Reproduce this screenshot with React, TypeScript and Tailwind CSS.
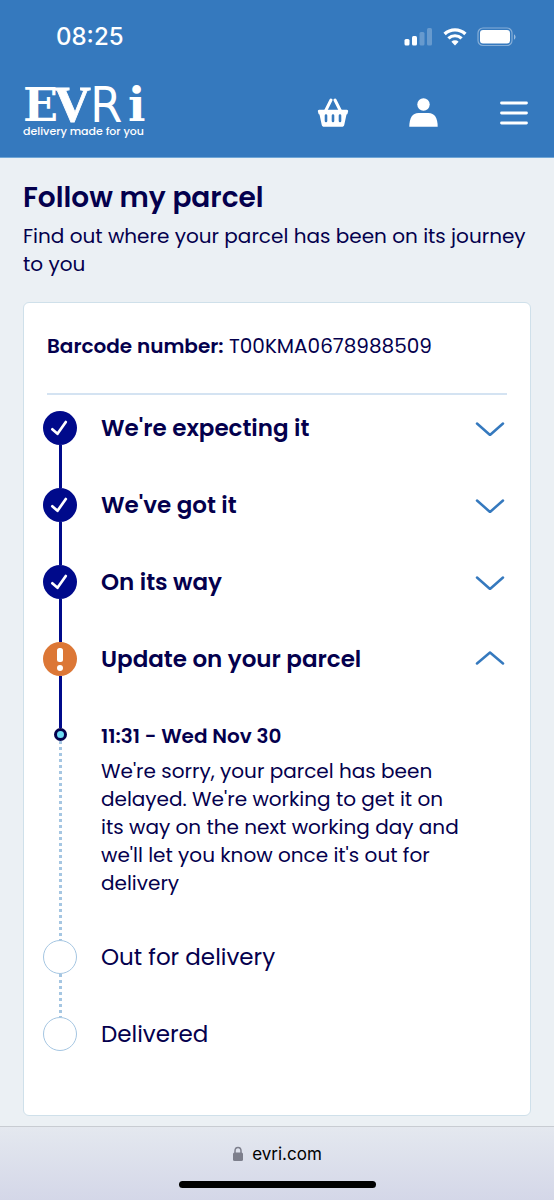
import { useState } from "react";

type StepState = "done" | "alert" | "pending";

type Step = {
  title: string;
  state: StepState;
  event?: { time: string; text: string };
};

const steps: Step[] = [
  { title: "We're expecting it", state: "done" },
  { title: "We've got it", state: "done" },
  { title: "On its way", state: "done" },
  {
    title: "Update on your parcel",
    state: "alert",
    event: {
      time: "11:31 - Wed Nov 30",
      text: "We're sorry, your parcel has been delayed. We're working to get it on its way on the next working day and we'll let you know once it's out for delivery",
    },
  },
  { title: "Out for delivery", state: "pending" },
  { title: "Delivered", state: "pending" },
];

function StatusBar() {
  return (
    <div className="flex h-[74px] items-center justify-between pr-[37px] pl-14">
      <span className="font-[Inter,sans-serif] text-2xl font-medium">08:25</span>
      <div className="flex items-center gap-[10px]">
        <svg width="29" height="18" viewBox="0 0 29 18" fill="currentColor" aria-hidden="true">
          <rect x="0.5" y="11" width="5" height="6.5" rx="1.5" />
          <rect x="8" y="8" width="5" height="9.5" rx="1.5" />
          <rect x="15.5" y="4" width="5" height="13.5" rx="1.5" opacity="0.25" />
          <rect x="23" y="0" width="5" height="17.5" rx="1.5" opacity="0.25" />
        </svg>
        <svg width="24" height="18" viewBox="0 0 24 18" fill="none" stroke="currentColor" aria-hidden="true">
          <path d="M1.6 6a15.200 15.200 0 0 1 20.800 0" strokeWidth="3.400" />
          <path d="M5.400 10.400a9.600 9.600 0 0 1 13.200 0" strokeWidth="3.200" />
          <path d="M12 17.500l-3.600-3.700a5.200 5.200 0 0 1 7.200 0z" fill="currentColor" stroke="none" />
        </svg>
        <svg width="40" height="20" viewBox="0 0 40 20" aria-hidden="true">
          <rect x="1" y="1" width="34" height="17.5" rx="5" fill="none" stroke="currentColor" strokeWidth="1.2" opacity="0.4" />
          <rect x="3" y="3" width="30" height="13.5" rx="3" fill="currentColor" />
          <path d="M37 7.500c2 .6 2 4.400 0 5z" fill="currentColor" opacity="0.5" />
        </svg>
      </div>
    </div>
  );
}

function Logo() {
  return (
    <a href="#home" className="flex flex-col">
      <svg className="overflow-visible" width="122" height="36" viewBox="0 0 122 36" fill="currentColor" role="img" aria-label="EVRi">
        <text x="0" y="34" fontFamily="DejaVu Serif, serif" fontWeight="700" fontSize="46">E</text>
        <text x="31" y="34" fontFamily="Liberation Serif, serif" fontWeight="700" fontSize="51" stroke="currentColor" strokeWidth="0.8">V</text>
        <text x="67" y="34" fontFamily="DejaVu Sans, sans-serif" fontWeight="200" fontSize="46" stroke="currentColor" strokeWidth="2">R</text>
        <text x="105" y="34" fontFamily="DejaVu Serif, serif" fontWeight="700" fontSize="46">i</text>
      </svg>
      <span className="text-[11px] leading-4 font-medium whitespace-nowrap">delivery made for you</span>
    </a>
  );
}

function Header() {
  return (
    <header className="border-b border-[#6fa6d6] bg-[#3579be] text-white">
      <StatusBar />
      <div className="flex h-[83px] items-start justify-between pt-[13px] pr-[25px] pl-[23px]">
        <Logo />
        <nav className="flex items-center gap-[60px] pt-[11px]">
          <button type="button" aria-label="Basket">
            <svg width="32" height="30" viewBox="0 0 32 30" fill="none" aria-hidden="true">
              <path d="M8.500 13L14 2M23.500 13L18 2" stroke="currentColor" strokeWidth="3" strokeLinecap="round" />
              <path d="M2.200 11.800h27.600c1 0 1.500.8 1.300 1.700l-.6 2.200c-.1.500-.5.700-1 .8l-2.200 10.200c-.3 1.400-1.100 2-2.500 2H7.200c-1.400 0-2.200-.6-2.500-2L2.500 16.500c-.5-.1-.9-.3-1-.8L.9 13.500c-.2-.9.300-1.700 1.300-1.700z" fill="currentColor" />
              <path d="M9 17.500v5.500M16 17.500v5.500M23 17.500v5.500" stroke="#3579be" strokeWidth="2.600" strokeLinecap="round" />
            </svg>
          </button>
          <button type="button" aria-label="Account">
            <svg width="30" height="30" viewBox="0 0 30 30" fill="currentColor" aria-hidden="true">
              <circle cx="14.500" cy="6.500" r="6.2" />
              <path d="M.3 28.800C.3 20 3.500 15 9.500 15h10c6 0 9.200 5 9.200 13.800z" />
            </svg>
          </button>
          <button type="button" aria-label="Menu">
            <svg width="30" height="30" viewBox="0 0 30 30" fill="none" stroke="currentColor" strokeWidth="2.8" strokeLinecap="round" aria-hidden="true">
              <path d="M2.500 5h25M2.500 15h25M2.500 25h25" />
            </svg>
          </button>
        </nav>
      </div>
    </header>
  );
}

function Marker({ state }: { state: StepState }) {
  if (state === "pending") {
    return <span className="size-[34px] shrink-0 rounded-full border border-[#a5c6e2]" />;
  }
  if (state === "alert") {
    return (
      <svg className="shrink-0" width="34" height="34" viewBox="0 0 34 34" aria-hidden="true">
        <circle cx="17" cy="17" r="17" fill="#dc7736" />
        <rect x="14" y="6" width="6" height="14" rx="2.5" fill="#fff" />
        <circle cx="17" cy="26" r="3" fill="#fff" />
      </svg>
    );
  }
  return (
    <svg className="shrink-0" width="34" height="34" viewBox="0 0 34 34" aria-hidden="true">
      <circle cx="17" cy="17" r="17" fill="#000a8b" />
      <path d="M9.300 18.300l5.200 4.500L22.800 11" fill="none" stroke="#fff" strokeWidth="2.700" strokeLinecap="round" strokeLinejoin="round" />
    </svg>
  );
}

function Chevron({ open }: { open: boolean }) {
  return (
    <svg width="30" height="16" viewBox="0 0 30 16" fill="none" stroke="#3579be" strokeWidth="2.5" strokeLinecap="round" strokeLinejoin="round" aria-hidden="true">
      <path d={open ? "M2 12.500L15 1.500L28 12.500" : "M2 3.500L15 15L28 3.500"} />
    </svg>
  );
}

const dotted =
  "w-[3px] flex-1 bg-[repeating-linear-gradient(to_bottom,#a5c6e2_0px,#a5c6e2_3px,transparent_3px,transparent_6px)]";
const solid = "w-[3px] flex-1 bg-[#000a8b]";

function Timeline() {
  const [openIndex, setOpenIndex] = useState(3);
  return (
    <ol className="-ml-1 pt-4 pb-16">
      {steps.map((step, i) => {
        const pending = step.state === "pending";
        const last = i === steps.length - 1;
        const open = i === openIndex;
        return (
          <li key={step.title}>
            <div className={last ? "flex gap-6" : "flex min-h-[77px] gap-6"}>
              <div className="flex w-[34px] shrink-0 flex-col items-center">
                <Marker state={step.state} />
                {!last && <span className={pending ? dotted : solid} />}
              </div>
              {pending ? (
                <h2 className="text-[23px] leading-[34px]">{step.title}</h2>
              ) : (
                <h2 className="flex-1">
                  <button
                    type="button"
                    aria-expanded={open}
                    onClick={() => setOpenIndex(open ? -1 : i)}
                    className="flex h-[34px] w-full items-center justify-between pr-0.5 text-left text-[23px] leading-[34px] font-semibold"
                  >
                    {step.title}
                    <Chevron open={open} />
                  </button>
                </h2>
              )}
            </div>
            {step.event && open && (
              <div className="flex gap-6">
                <div className="flex w-[34px] shrink-0 flex-col items-center">
                  <span className="h-[9px] w-[3px] bg-[#000a8b]" />
                  <span className="size-[13px] rounded-full border-3 border-[#04004d] bg-[#6fdcf5]" />
                  <span className={dotted} />
                </div>
                <div className="max-w-[368px] pb-[43px]">
                  <h3 className="text-xl leading-[34px] font-semibold">{step.event.time}</h3>
                  <p className="pt-1 text-xl leading-7">{step.event.text}</p>
                </div>
              </div>
            )}
          </li>
        );
      })}
    </ol>
  );
}

export default function App() {
  return (
    <div className="flex min-h-screen flex-col bg-[#ebf0f4] font-[Poppins,Inter,sans-serif] text-[#04004d]">
      <Header />
      <main className="flex-1 px-[23px] pt-5 pb-[10px]">
        <h1 className="text-[28px] leading-10 font-semibold">Follow my parcel</h1>
        <p className="pt-1 text-xl leading-7">Find out where your parcel has been on its journey to you</p>
        <section className="mt-6 rounded-md border border-[#cfe0ea] bg-white px-[23px]">
          <p className="border-b-2 border-[#d4e3f2] pt-[29px] pb-[33px] text-xl leading-7">
            <strong className="font-semibold">Barcode number:</strong> T00KMA0678988509
          </p>
          <Timeline />
        </section>
      </main>
      <footer className="flex h-[74px] flex-col items-center border-t border-[#c8ccd2] bg-linear-to-b from-[#e4e8ef] to-[#d4d7e8] pt-[14px]">
        <a href="https://evri.com" className="flex items-center gap-2 font-[Inter,sans-serif] text-[17px] leading-[26px] text-black">
          <svg width="12" height="16" viewBox="0 0 12 16" aria-hidden="true">
            <rect x="1" y="6.5" width="10" height="8.5" rx="1.5" fill="#7d7f8c" />
            <path d="M3 8V5a3 3.500 0 0 1 6 0v3" fill="none" stroke="#7d7f8c" strokeWidth="1.500" />
          </svg>
          evri.com
        </a>
        <span className="mt-[14px] h-[7px] w-[197px] rounded-full bg-black" />
      </footer>
    </div>
  );
}
